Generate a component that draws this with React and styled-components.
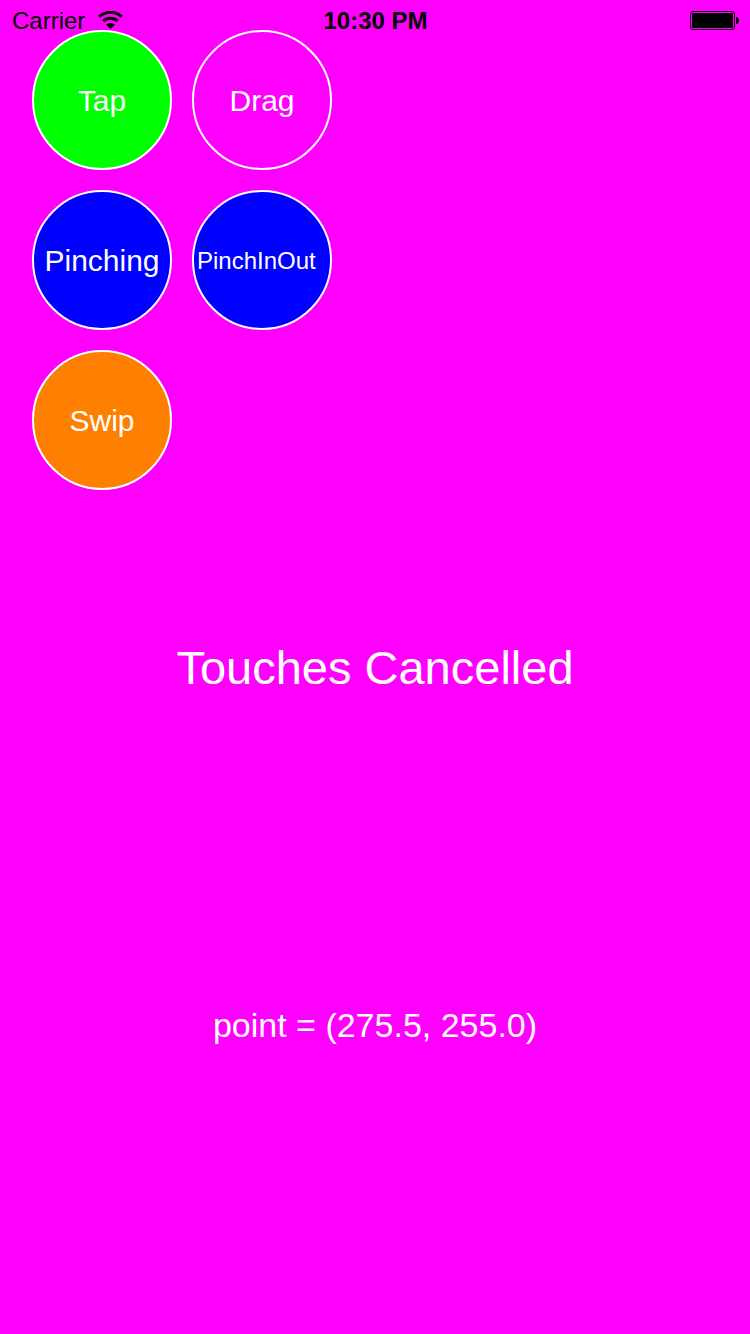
import React from "react";
import styled, { createGlobalStyle } from "styled-components";

const GlobalStyle = createGlobalStyle`
  *, *::before, *::after { box-sizing: border-box; }
  body {
    margin: 0;
    background: #ff00ff;
    font-family: "Liberation Sans", Arial, sans-serif;
  }
`;

const Screen = styled.div`
  min-height: 100vh;
  display: flex;
  flex-direction: column;
  background: #ff00ff;
  color: #ffffff;
`;

const StatusBar = styled.header`
  display: grid;
  grid-template-columns: 1fr auto 1fr;
  align-items: center;
  padding: 11px 11px 0 12px;
  font-size: 24px;
  line-height: 19px;
  color: #000000;
`;

const Network = styled.div`
  display: flex;
  align-items: center;
  gap: 13px;
`;

const Clock = styled.time`
  font-weight: 700;
`;

const Battery = styled.svg`
  display: block;
  justify-self: end;
`;

const GestureGrid = styled.nav`
  display: grid;
  grid-template-columns: repeat(2, 140px);
  gap: 20px;
  padding: 0 32px;
`;

const GestureButton = styled.button`
  height: 140px;
  padding: 2px 3px 0;
  border: 2px solid #ffffff;
  border-radius: 50%;
  background: ${({ $fill }) => $fill};
  color: inherit;
  font-family: inherit;
  font-size: ${({ $compact }) => ($compact ? 24 : 30)}px;
  line-height: 36px;
  text-align: ${({ $compact }) => ($compact ? "left" : "center")};
  white-space: nowrap;
  cursor: pointer;
`;

const Readout = styled.main`
  flex: 1;
  display: grid;
  grid-template-rows: 150fr 56px 309fr 40px 289fr;
  justify-items: center;
`;

const TouchState = styled.h1`
  grid-row: 2;
  margin: 0;
  font-size: 47px;
  font-weight: 400;
  line-height: 56px;
`;

const TouchPoint = styled.p`
  grid-row: 4;
  margin: 0;
  font-size: 34px;
  line-height: 40px;
`;

const gestures = [
  { name: "Tap", fill: "#00ff00" },
  { name: "Drag", fill: "#ff00ff" },
  { name: "Pinching", fill: "#0000ff" },
  { name: "PinchInOut", fill: "#0000ff", compact: true },
  { name: "Swip", fill: "#ff8000" },
];

function WifiIcon() {
  return (
    <svg width="25" height="19" viewBox="0 0 25 19" aria-hidden="true">
      <path d="M1.2 5.8C7.6-.2 17.4-.2 23.8 5.8" fill="none" stroke="#000" strokeWidth="3.1" />
      <path d="M5.2 10.1C9.5 6.2 15.5 6.2 19.8 10.1" fill="none" stroke="#000" strokeWidth="3.1" />
      <path d="M12.5 18 8 13.6C10.5 11.5 14.5 11.5 17 13.6Z" />
    </svg>
  );
}

export default function App() {
  return (
    <>
      <GlobalStyle />
      <Screen>
        <StatusBar>
          <Network>
            <span>Carrier</span>
            <WifiIcon />
          </Network>
          <Clock dateTime="22:30">10:30 PM</Clock>
          <Battery width="49" height="19" viewBox="0 0 49 19" role="img" aria-label="Battery full">
            <rect x=".5" y=".5" width="44" height="18" rx="2.5" fill="none" stroke="#000" />
            <rect x="2" y="2" width="41" height="15" rx="1" />
            <path d="M46 6h1q2 1 2 3.5T47 13h-1z" />
          </Battery>
        </StatusBar>
        <GestureGrid aria-label="Gestures">
          {gestures.map(({ name, fill, compact }) => (
            <GestureButton key={name} type="button" $fill={fill} $compact={compact}>
              {name}
            </GestureButton>
          ))}
        </GestureGrid>
        <Readout>
          <TouchState>Touches Cancelled</TouchState>
          <TouchPoint>point = (275.5, 255.0)</TouchPoint>
        </Readout>
      </Screen>
    </>
  );
}
